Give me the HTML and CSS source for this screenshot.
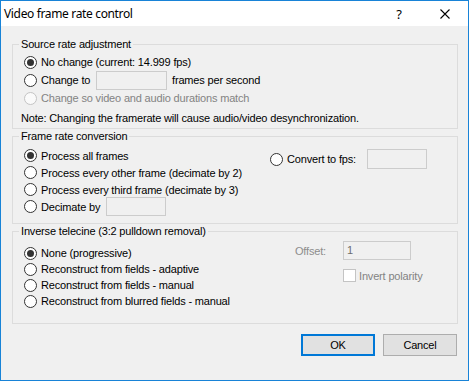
FILE: index.html
```html
<!DOCTYPE html>
<html>
<head>
<meta charset="utf-8">
<link rel="stylesheet" href="styles.css">
</head>
<body>
<div class="window">
  <div class="titlebar">
    <span class="title">Video frame rate control</span>
    <span class="cap help">?</span>
    <span class="cap close"><svg width="10" height="10" viewBox="0 0 10 10"><path d="M0.5 0.5 L9.5 9.5 M9.5 0.5 L0.5 9.5" stroke="#000" stroke-width="1.1" fill="none"/></svg></span>
  </div>
  <div class="content">
    <fieldset class="group g1">
      <legend>Source rate adjustment</legend>
      <div class="rows r1">
        <div class="row"><span class="radio on"></span><span>No change (current: 14.999 fps)</span></div>
        <div class="row"><span class="radio"></span><span class="lab-change">Change to</span><span class="field f-change"></span><span>frames per second</span></div>
        <div class="row disabled"><span class="radio dis"></span><span>Change so video and audio durations match</span></div>
        <div class="row note">Note: Changing the framerate will cause audio/video desynchronization.</div>
      </div>
    </fieldset>

    <fieldset class="group g2">
      <legend>Frame rate conversion</legend>
      <div class="cols">
        <div class="rows r2">
          <div class="row"><span class="radio on"></span><span>Process all frames</span></div>
          <div class="row"><span class="radio"></span><span>Process every other frame (decimate by 2)</span></div>
          <div class="row"><span class="radio"></span><span>Process every third frame (decimate by 3)</span></div>
          <div class="row"><span class="radio"></span><span class="lab-dec">Decimate by</span><span class="field f-dec"></span></div>
        </div>
        <div class="side s2">
          <div class="row conv"><span class="radio"></span><span class="lab-conv">Convert to fps:</span><span class="field f-conv"></span></div>
        </div>
      </div>
    </fieldset>

    <fieldset class="group g3">
      <legend>Inverse telecine (3:2 pulldown removal)</legend>
      <div class="cols">
        <div class="rows r3">
          <div class="row"><span class="radio on"></span><span>None (progressive)</span></div>
          <div class="row"><span class="radio"></span><span>Reconstruct from fields - adaptive</span></div>
          <div class="row"><span class="radio"></span><span>Reconstruct from fields - manual</span></div>
          <div class="row"><span class="radio"></span><span>Reconstruct from blurred fields - manual</span></div>
        </div>
        <div class="side s3">
          <span class="off-lab">Offset:</span>
          <span class="field f-off">1</span>
          <span class="chk-row"><span class="check"></span><span class="chk-lab">Invert polarity</span></span>
        </div>
      </div>
    </fieldset>

    <div class="buttons">
      <button class="btn default">OK</button>
      <button class="btn">Cancel</button>
    </div>
  </div>
</div>
</body>
</html>
```

FILE: styles.css
```css
* { box-sizing: border-box; }
html, body { margin: 0; padding: 0; }
body {
  font-family: "Liberation Sans", Arial, sans-serif;
  font-size: 11px;
  letter-spacing: -0.17px;
  color: #000;
  background: #f0f0f0;
}
.window {
  width: 469px;
  height: 381px;
  border: 1px solid #1883d7;
  background: #f0f0f0;
  display: flex;
  flex-direction: column;
}
.titlebar {
  height: 25px;
  flex: none;
  background: #fff;
  display: flex;
  align-items: center;
  padding-left: 3px;
  font-family: "Noto Sans", sans-serif;
  font-size: 12px;
  letter-spacing: -0.35px;
}
.title { flex: 1; }
.cap {
  width: 46px;
  height: 25px;
  display: flex;
  align-items: center;
  justify-content: center;
}
.help { font-size: 13px; }
.close svg { display: block; }

.content {
  padding: 11px 10px 0 11px;
  display: flex;
  flex-direction: column;
}
fieldset.group {
  margin: 0;
  padding: 0;
  border: 1px solid #dcdcdc;
  min-width: 0;
}
legend {
  margin-left: 6px;
  padding: 0 2px;
  line-height: 14px;
}
.g2 { margin-top: 4px; }
.g3 { margin-top: 6px; }

.rows { display: flex; flex-direction: column; padding-left: 11px; }
.row {
  display: flex;
  align-items: center;
  white-space: nowrap;
}
.r1 { padding-top: 2px; padding-bottom: 1px; }
.r1 .row { height: 18px; }
.r1 .note { margin-left: -3px; margin-top: 2px; }
.disabled { color: #838383; }

.cols { display: flex; align-items: flex-start; }
.r2 { width: 257px; padding-top: 4px; padding-bottom: 8px; }
.r2 .row { height: 17px; }
.s2 { padding-top: 6px; }
.conv { height: 20px; }

.r3 { width: 257px; padding-top: 7px; padding-bottom: 14px; }
.r3 .row { height: 16px; }

.radio {
  width: 13px;
  height: 13px;
  flex: none;
  border: 1px solid #333;
  border-radius: 50%;
  background: #fff;
  margin-right: 4px;
  display: flex;
  align-items: center;
  justify-content: center;
}
.radio.on::after {
  content: "";
  width: 7px;
  height: 7px;
  border-radius: 50%;
  background: #333;
}
.radio.dis { border-color: #c4c4c4; background: #fafafa; }

.field {
  display: block;
  flex: none;
  height: 19px;
  border: 1px solid #cccccc;
  background: #f0f0f0;
}
.lab-change { width: 55px; }
.f-change { width: 71px; margin-right: 5px; }
.lab-dec { width: 65px; }
.f-dec { width: 60px; }
.lab-conv { width: 80px; }
.f-conv { width: 60px; height: 20px; }

.s3 {
  margin-top: 3px;
  display: grid;
  grid-template-columns: 73px 68px;
  grid-template-rows: 19px 13px;
  row-gap: 9px;
  align-items: center;
}
.off-lab { color: #8d8d8d; text-align: right; padding-right: 17px; }
.f-off { color: #6d6d6d; padding-left: 3px; line-height: 17px; }
.chk-row {
  grid-column: 2;
  display: flex;
  align-items: center;
  white-space: nowrap;
  color: #838383;
}
.check {
  width: 13px;
  height: 13px;
  flex: none;
  border: 1px solid #c4c4c4;
  background: #fff;
  margin-right: 3px;
}

.buttons {
  margin-top: 10px;
  margin-right: 1px;
  display: flex;
  justify-content: flex-end;
  gap: 8px;
}
.btn {
  width: 74px;
  height: 22px;
  margin: 0;
  padding: 0;
  font-family: "Liberation Sans", Arial, sans-serif;
  font-size: 11px;
  letter-spacing: -0.17px;
  color: #000;
  background: #e1e1e1;
  border: 1px solid #adadad;
  border-radius: 0;
}
.btn.default { border: 2px solid #0078d7; }
```
